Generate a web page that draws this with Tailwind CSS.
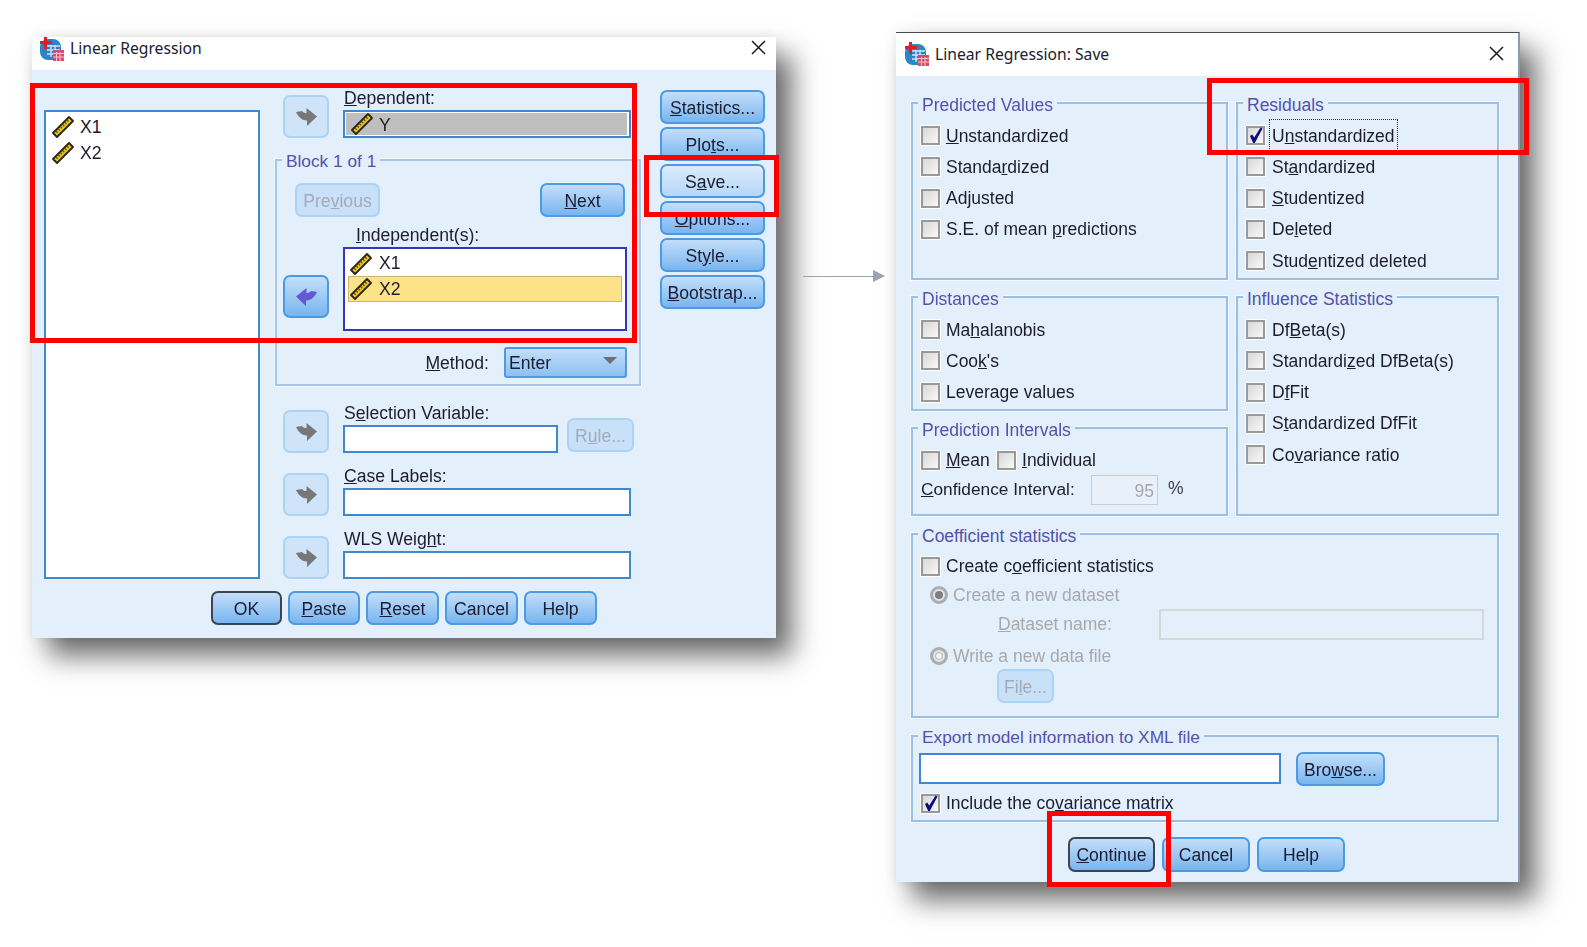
<!DOCTYPE html>
<html lang="en">
<head>
  <meta charset="UTF-8" />
  <meta name="viewport" content="width=device-width, initial-scale=1.0"/>
  <title>Linear Regression</title>
  <script src="https://cdn.jsdelivr.net/npm/@tailwindcss/browser@4"></script>
</head>
<body class="relative w-[1587px] h-[947px] overflow-hidden bg-white font-['Liberation_Sans',sans-serif] text-[#1c1c30]">

  <!-- Shared icons -->
  <svg class="hidden">
    <symbol id="ruler" viewBox="0 0 22 22">
      <polygon points="1,17 17,1 21,5 5,21" fill="#f0c61c" stroke="#26261a" stroke-width="1.8" stroke-linejoin="round"/>
      <path d="M4.5 16.5L16.5 4.5" stroke="#5f5210" stroke-width="2" stroke-dasharray="1.4 1.7" fill="none"/>
    </symbol>
    <symbol id="arrow" viewBox="0 0 21 18">
      <path d="M10.5 0L21 8.5L11 18V12.5C7 12.5 3 10.5 0 4L6 3C7 4.5 8.5 5 10.5 5Z"/>
    </symbol>
    <symbol id="tick" viewBox="0 0 19 19">
      <path d="M4 10L6.2 8.4L8.2 11.5L14.6 1.5L16.5 2.4L8.8 17H7.2Z" fill="#0b0b80"/>
    </symbol>
    <symbol id="spss" viewBox="0 0 24 24">
      <rect x="0" y="2" width="21" height="21" rx="8" fill="#2f83c4"/>
      <path d="M7 9H20M7 13H20M7 17H14M11 8V20M15 8V14" stroke="#cfe6f7" stroke-width="1.4" fill="none"/>
      <rect x="4" y="0" width="3" height="12" fill="#d4202c"/>
      <rect x="0" y="4" width="12" height="3" fill="#d4202c"/>
      <rect x="13" y="13" width="11" height="11" fill="#d2506b"/>
      <path d="M13 16.5H24M13 20H24M16.5 15V24M20 15V24" stroke="#f3c4cf" stroke-width="1" fill="none"/>
    </symbol>
    <symbol id="close" viewBox="0 0 15 15">
      <path d="M1 1L14 14M14 1L1 14" stroke="#1a1a1a" stroke-width="1.5" fill="none"/>
    </symbol>
  </svg>

  <!-- Linear Regression window -->
  <div class="absolute left-[32px] top-[37px] w-[744px] h-[601px] flex flex-col bg-[#e3effb] text-[17.6px] shadow-[16px_18px_26px_rgba(0,0,0,0.58),0_0_12px_rgba(0,0,0,0.08)]">
    <div class="h-[33px] shrink-0 bg-white flex items-start justify-between pl-[8px] pr-[10px]">
      <div class="flex items-center h-[24px] gap-[6px]">
        <svg class="w-[24px] h-[24px]"><use href="#spss"/></svg>
        <span class="font-['Noto_Sans',sans-serif] text-[15.7px] text-[#202030]">Linear Regression</span>
      </div>
      <svg class="w-[15px] h-[15px] mt-[3px]"><use href="#close"/></svg>
    </div>

    <div class="flex-1 flex flex-col pl-[12px] blur-[0.4px]">
      <div class="flex">
        <!-- Source list -->
        <div class="mt-[40px] w-[216px] h-[469px] border-2 border-[#3f88cf] bg-white pl-[6px] pt-[2px] flex flex-col">
          <div class="h-[26px] flex items-center gap-[6px]"><svg class="w-[22px] h-[22px]"><use href="#ruler"/></svg>X1</div>
          <div class="h-[26px] flex items-center gap-[6px]"><svg class="w-[22px] h-[22px]"><use href="#ruler"/></svg>X2</div>
        </div>

        <!-- Middle column -->
        <div class="ml-[15px] w-[366px] pt-[20px] flex flex-col">
          <div class="flex items-end pl-[8px]">
            <div class="w-[46px] h-[43px] rounded-[7px] border-2 border-[#abd3f6] bg-[#cfe4f9] flex items-center justify-center"><svg class="w-[21px] h-[18px] fill-[#777777]"><use href="#arrow"/></svg></div>
            <div class="ml-[14px] w-[288px] flex flex-col">
              <div class="h-[20px] leading-[16px] pl-[1px]"><u>D</u>ependent:</div>
              <div class="h-[28px] border-2 border-[#3f88cf] bg-white p-[1px] pr-[2px]">
                <div class="h-full bg-[#bfbfbf] flex items-center gap-[6px] pl-[5px] pt-[2px]"><svg class="w-[22px] h-[22px] -mt-[2px]"><use href="#ruler"/></svg>Y</div>
              </div>
            </div>
          </div>

          <!-- Block group -->
          <div class="relative mt-[21px] h-[227px] border-2 border-[#a6c7e6] shadow-[0_0_0_1px_#f3f8fd] pt-[22px] flex flex-col">
            <span class="absolute -top-[12px] left-[5px] px-[4px] bg-[#e3effb] text-[#5252ad] text-[17.3px]">Block 1 of 1</span>
            <div class="flex justify-between pl-[18px] pr-[14px]">
              <div class="w-[85px] h-[34px] pt-[2px] rounded-[7px] border-2 border-[#abd3f6] bg-[#c8e0f8] text-[#a3acb6] flex items-center justify-center"><span>Pre<u>v</u>ious</span></div>
              <div class="w-[85px] h-[34px] pt-[2px] rounded-[7px] border-2 border-[#4b9ae3] bg-linear-to-b from-[#c3defa] to-[#78b5ee] flex items-center justify-center"><span><u>N</u>ext</span></div>
            </div>
            <div class="mt-[10px] flex items-start pl-[6px]">
              <div class="mt-[48px] w-[46px] h-[43px] rounded-[7px] border-2 border-[#4b9ae3] bg-linear-to-b from-[#c3defa] to-[#78b5ee] flex items-center justify-center"><svg class="w-[21px] h-[18px] fill-[#6459d2] -scale-x-100"><use href="#arrow"/></svg></div>
              <div class="ml-[14px] w-[284px] flex flex-col">
                <div class="h-[20px] leading-[16px] pl-[13px]"><u>I</u>ndependent(s):</div>
                <div class="h-[84px] border-2 border-[#3535bd] bg-white pl-[3px] pr-[3px] pt-[2px] flex flex-col">
                  <div class="h-[25px] flex items-center gap-[7px] pl-[2px]"><svg class="w-[22px] h-[22px]"><use href="#ruler"/></svg>X1</div>
                  <div class="h-[26px] flex items-center gap-[7px] pl-[1px] bg-[#fde288] border border-[#c9b670]"><svg class="w-[22px] h-[22px]"><use href="#ruler"/></svg>X2</div>
                </div>
              </div>
            </div>
            <div class="mt-[16px] flex items-center justify-end pr-[12px]">
              <span class="pt-[2px]"><u>M</u>ethod:</span>
              <div class="ml-[15px] w-[123px] h-[31px] rounded-[3px] border-2 border-[#4b9ae3] bg-linear-to-b from-[#c3defa] to-[#8cc0f1] flex items-center justify-between pl-[3px] pr-[8px]">
                <span class="pt-[2px]">Enter</span>
                <span class="mb-[4px] w-0 h-0 border-x-[7px] border-x-transparent border-t-[7px] border-t-[#6f6f6f]"></span>
              </div>
            </div>
          </div>

          <!-- Selection variable -->
          <div class="mt-[19px] flex items-end pl-[8px]">
            <div class="w-[46px] h-[43px] rounded-[7px] border-2 border-[#abd3f6] bg-[#cfe4f9] flex items-center justify-center"><svg class="w-[21px] h-[18px] fill-[#777777]"><use href="#arrow"/></svg></div>
            <div class="ml-[14px] w-[215px] flex flex-col">
              <div class="h-[20px] leading-[16px] pl-[1px] whitespace-nowrap">S<u>e</u>lection Variable:</div>
              <div class="h-[28px] border-2 border-[#3f88cf] bg-white"></div>
            </div>
            <div class="ml-[9px] mb-[1px] w-[67px] h-[34px] pt-[2px] rounded-[7px] border-2 border-[#abd3f6] bg-[#c8e0f8] text-[#a3acb6] flex items-center justify-center"><span>R<u>u</u>le...</span></div>
          </div>

          <!-- Case labels -->
          <div class="mt-[15px] flex items-end pl-[8px]">
            <div class="w-[46px] h-[43px] rounded-[7px] border-2 border-[#abd3f6] bg-[#cfe4f9] flex items-center justify-center"><svg class="w-[21px] h-[18px] fill-[#777777]"><use href="#arrow"/></svg></div>
            <div class="ml-[14px] w-[288px] flex flex-col">
              <div class="h-[20px] leading-[16px] pl-[1px]"><u>C</u>ase Labels:</div>
              <div class="h-[28px] border-2 border-[#3f88cf] bg-white"></div>
            </div>
          </div>

          <!-- WLS weight -->
          <div class="mt-[15px] flex items-end pl-[8px]">
            <div class="w-[46px] h-[43px] rounded-[7px] border-2 border-[#abd3f6] bg-[#cfe4f9] flex items-center justify-center"><svg class="w-[21px] h-[18px] fill-[#777777]"><use href="#arrow"/></svg></div>
            <div class="ml-[14px] w-[288px] flex flex-col">
              <div class="h-[20px] leading-[16px] pl-[1px]">WLS Wei<u>gh</u>t:</div>
              <div class="h-[28px] border-2 border-[#3f88cf] bg-white"></div>
            </div>
          </div>
        </div>

        <!-- Right buttons -->
        <div class="ml-[19px] pt-[20px] w-[105px] flex flex-col gap-[3px]">
          <div class="h-[34px] pt-[2px] rounded-[7px] border-2 border-[#4b9ae3] bg-linear-to-b from-[#c3defa] to-[#78b5ee] flex items-center justify-center"><span><u>S</u>tatistics...</span></div>
          <div class="h-[34px] pt-[2px] rounded-[7px] border-2 border-[#4b9ae3] bg-linear-to-b from-[#c3defa] to-[#78b5ee] flex items-center justify-center"><span>Plo<u>t</u>s...</span></div>
          <div class="h-[34px] pt-[2px] rounded-[7px] border-2 border-[#4b9ae3] bg-linear-to-b from-[#dcecfd] to-[#b5d6f7] flex items-center justify-center"><span>S<u>a</u>ve...</span></div>
          <div class="h-[34px] pt-[2px] rounded-[7px] border-2 border-[#4b9ae3] bg-linear-to-b from-[#c3defa] to-[#78b5ee] flex items-center justify-center"><span><u>O</u>ptions...</span></div>
          <div class="h-[34px] pt-[2px] rounded-[7px] border-2 border-[#4b9ae3] bg-linear-to-b from-[#c3defa] to-[#78b5ee] flex items-center justify-center"><span>St<u>y</u>le...</span></div>
          <div class="h-[34px] pt-[2px] rounded-[7px] border-2 border-[#4b9ae3] bg-linear-to-b from-[#c3defa] to-[#78b5ee] flex items-center justify-center"><span><u>B</u>ootstrap...</span></div>
        </div>
      </div>

      <!-- Footer buttons -->
      <div class="mt-[12px] pl-[167px] flex gap-[6px]">
        <div class="w-[71px] h-[34px] pt-[2px] rounded-[7px] border-2 border-[#3d4650] bg-linear-to-b from-[#c3defa] to-[#78b5ee] flex items-center justify-center">OK</div>
        <div class="w-[72px] h-[34px] pt-[2px] rounded-[7px] border-2 border-[#4b9ae3] bg-linear-to-b from-[#c3defa] to-[#78b5ee] flex items-center justify-center"><span><u>P</u>aste</span></div>
        <div class="w-[73px] h-[34px] pt-[2px] rounded-[7px] border-2 border-[#4b9ae3] bg-linear-to-b from-[#c3defa] to-[#78b5ee] flex items-center justify-center"><span><u>R</u>eset</span></div>
        <div class="w-[73px] h-[34px] pt-[2px] rounded-[7px] border-2 border-[#4b9ae3] bg-linear-to-b from-[#c3defa] to-[#78b5ee] flex items-center justify-center">Cancel</div>
        <div class="w-[73px] h-[34px] pt-[2px] rounded-[7px] border-2 border-[#4b9ae3] bg-linear-to-b from-[#c3defa] to-[#78b5ee] flex items-center justify-center">Help</div>
      </div>
    </div>
  </div>

  <!-- Arrow between the windows -->
  <div class="absolute left-[803px] top-[270px] flex items-center">
    <div class="w-[70px] h-px bg-[#9aa5b1]"></div>
    <div class="w-0 h-0 border-y-[6px] border-y-transparent border-l-[12px] border-l-[#9aa5b1]"></div>
  </div>

  <!-- Save window -->
  <div class="absolute left-[896px] top-[32px] w-[624px] h-[850px] flex flex-col bg-[#e3effb] text-[17.5px] border-t border-t-[#4a4a4a] border-r-2 border-r-[#8b9cae] shadow-[16px_18px_26px_rgba(0,0,0,0.58),0_0_12px_rgba(0,0,0,0.08)]">
    <div class="h-[43px] shrink-0 bg-white flex items-start justify-between pl-[9px] pr-[14px] pt-[9px]">
      <div class="flex items-center h-[24px] gap-[6px]">
        <svg class="w-[24px] h-[24px]"><use href="#spss"/></svg>
        <span class="font-['Noto_Sans',sans-serif] text-[15.7px] text-[#202030] pt-[2px]">Linear Regression: Save</span>
      </div>
      <svg class="w-[15px] h-[15px] mt-[4px]"><use href="#close"/></svg>
    </div>

    <div class="flex-1 flex flex-col pl-[15px] pt-[26px] w-[603px] blur-[0.4px]">
      <div class="flex gap-[8px]">
        <!-- Left groups -->
        <div class="w-[317px] flex flex-col">
          <div class="relative h-[178px] border-2 border-[#9cc0e3] shadow-[0_0_0_1px_#f3f8fd] pl-[8px] pt-[16px] flex flex-col">
            <span class="absolute -top-[12px] left-[5px] px-[4px] bg-[#e3effb] text-[#5252ad]">Predicted Values</span>
            <div class="h-[31.3px] flex items-center"><span class="w-[19px] h-[19px] mr-[6px] border-2 border-[#999999] shadow-[0_0_0_1px_#ffffff] bg-linear-to-br from-[#d8d8d8] to-[#f8f8f8]"></span><span><u>U</u>nstandardized</span></div>
            <div class="h-[31.3px] flex items-center"><span class="w-[19px] h-[19px] mr-[6px] border-2 border-[#999999] shadow-[0_0_0_1px_#ffffff] bg-linear-to-br from-[#d8d8d8] to-[#f8f8f8]"></span><span>Standa<u>r</u>dized</span></div>
            <div class="h-[31.3px] flex items-center"><span class="w-[19px] h-[19px] mr-[6px] border-2 border-[#999999] shadow-[0_0_0_1px_#ffffff] bg-linear-to-br from-[#d8d8d8] to-[#f8f8f8]"></span><span>Ad<u>j</u>usted</span></div>
            <div class="h-[31.3px] flex items-center"><span class="w-[19px] h-[19px] mr-[6px] border-2 border-[#999999] shadow-[0_0_0_1px_#ffffff] bg-linear-to-br from-[#d8d8d8] to-[#f8f8f8]"></span><span>S.E. of mean <u>p</u>redictions</span></div>
          </div>
          <div class="relative mt-[16px] h-[115px] border-2 border-[#9cc0e3] shadow-[0_0_0_1px_#f3f8fd] pl-[8px] pt-[16px] flex flex-col">
            <span class="absolute -top-[12px] left-[5px] px-[4px] bg-[#e3effb] text-[#5252ad]">Distances</span>
            <div class="h-[31.3px] flex items-center"><span class="w-[19px] h-[19px] mr-[6px] border-2 border-[#999999] shadow-[0_0_0_1px_#ffffff] bg-linear-to-br from-[#d8d8d8] to-[#f8f8f8]"></span><span>Ma<u>h</u>alanobis</span></div>
            <div class="h-[31.3px] flex items-center"><span class="w-[19px] h-[19px] mr-[6px] border-2 border-[#999999] shadow-[0_0_0_1px_#ffffff] bg-linear-to-br from-[#d8d8d8] to-[#f8f8f8]"></span><span>Coo<u>k</u>'s</span></div>
            <div class="h-[31.3px] flex items-center"><span class="w-[19px] h-[19px] mr-[6px] border-2 border-[#999999] shadow-[0_0_0_1px_#ffffff] bg-linear-to-br from-[#d8d8d8] to-[#f8f8f8]"></span><span>Leverage values</span></div>
          </div>
          <div class="relative mt-[16px] h-[89px] border-2 border-[#9cc0e3] shadow-[0_0_0_1px_#f3f8fd] pl-[8px] pt-[16px] flex flex-col">
            <span class="absolute -top-[12px] left-[5px] px-[4px] bg-[#e3effb] text-[#5252ad]">Prediction Intervals</span>
            <div class="h-[30px] flex items-center">
              <span class="w-[19px] h-[19px] mr-[6px] border-2 border-[#999999] shadow-[0_0_0_1px_#ffffff] bg-linear-to-br from-[#d8d8d8] to-[#f8f8f8]"></span><span class="w-[51px]"><u>M</u>ean</span>
              <span class="w-[19px] h-[19px] mr-[6px] border-2 border-[#999999] shadow-[0_0_0_1px_#ffffff] bg-linear-to-br from-[#d8d8d8] to-[#f8f8f8]"></span><span><u>I</u>ndividual</span>
            </div>
            <div class="h-[30px] flex items-center">
              <span class="w-[170px] text-[17.3px]"><u>C</u>onfidence Interval:</span>
              <span class="w-[67px] h-[30px] pt-[2px] border border-[#c9ccd0] bg-[#e8f1fa] text-[#a3a8ae] flex items-center justify-end pr-[3px]">95</span>
              <span class="ml-[10px] mb-[3px] text-[#3c3c4c]">%</span>
            </div>
          </div>
        </div>

        <!-- Right groups -->
        <div class="w-[263px] flex flex-col">
          <div class="relative h-[178px] border-2 border-[#9cc0e3] shadow-[0_0_0_1px_#f3f8fd] pl-[8px] pt-[16px] flex flex-col">
            <span class="absolute -top-[12px] left-[5px] px-[4px] bg-[#e3effb] text-[#5252ad]">Residuals</span>
            <div class="h-[31.3px] flex items-center"><span class="w-[19px] h-[19px] mr-[4px] border-2 border-[#999999] shadow-[0_0_0_1px_#ffffff] bg-linear-to-br from-[#d8d8d8] to-[#f8f8f8]"><svg class="w-[19px] h-[19px] -m-[2px]"><use href="#tick"/></svg></span><span class="border border-dotted border-[#303030] px-[2px] py-[3px]">U<u>n</u>standardized</span></div>
            <div class="h-[31.3px] flex items-center"><span class="w-[19px] h-[19px] mr-[7px] border-2 border-[#999999] shadow-[0_0_0_1px_#ffffff] bg-linear-to-br from-[#d8d8d8] to-[#f8f8f8]"></span><span>St<u>a</u>ndardized</span></div>
            <div class="h-[31.3px] flex items-center"><span class="w-[19px] h-[19px] mr-[7px] border-2 border-[#999999] shadow-[0_0_0_1px_#ffffff] bg-linear-to-br from-[#d8d8d8] to-[#f8f8f8]"></span><span><u>S</u>tudentized</span></div>
            <div class="h-[31.3px] flex items-center"><span class="w-[19px] h-[19px] mr-[7px] border-2 border-[#999999] shadow-[0_0_0_1px_#ffffff] bg-linear-to-br from-[#d8d8d8] to-[#f8f8f8]"></span><span>De<u>l</u>eted</span></div>
            <div class="h-[31.3px] flex items-center"><span class="w-[19px] h-[19px] mr-[7px] border-2 border-[#999999] shadow-[0_0_0_1px_#ffffff] bg-linear-to-br from-[#d8d8d8] to-[#f8f8f8]"></span><span>Stud<u>e</u>ntized deleted</span></div>
          </div>
          <div class="relative mt-[16px] h-[220px] border-2 border-[#9cc0e3] shadow-[0_0_0_1px_#f3f8fd] pl-[8px] pt-[16px] flex flex-col">
            <span class="absolute -top-[12px] left-[5px] px-[4px] bg-[#e3effb] text-[#5252ad]">Influence Statistics</span>
            <div class="h-[31.3px] flex items-center"><span class="w-[19px] h-[19px] mr-[7px] border-2 border-[#999999] shadow-[0_0_0_1px_#ffffff] bg-linear-to-br from-[#d8d8d8] to-[#f8f8f8]"></span><span>Df<u>B</u>eta(s)</span></div>
            <div class="h-[31.3px] flex items-center"><span class="w-[19px] h-[19px] mr-[7px] border-2 border-[#999999] shadow-[0_0_0_1px_#ffffff] bg-linear-to-br from-[#d8d8d8] to-[#f8f8f8]"></span><span>Standardi<u>z</u>ed DfBeta(s)</span></div>
            <div class="h-[31.3px] flex items-center"><span class="w-[19px] h-[19px] mr-[7px] border-2 border-[#999999] shadow-[0_0_0_1px_#ffffff] bg-linear-to-br from-[#d8d8d8] to-[#f8f8f8]"></span><span>D<u>f</u>Fit</span></div>
            <div class="h-[31.3px] flex items-center"><span class="w-[19px] h-[19px] mr-[7px] border-2 border-[#999999] shadow-[0_0_0_1px_#ffffff] bg-linear-to-br from-[#d8d8d8] to-[#f8f8f8]"></span><span>S<u>t</u>andardized DfFit</span></div>
            <div class="h-[31.3px] flex items-center"><span class="w-[19px] h-[19px] mr-[7px] border-2 border-[#999999] shadow-[0_0_0_1px_#ffffff] bg-linear-to-br from-[#d8d8d8] to-[#f8f8f8]"></span><span>Co<u>v</u>ariance ratio</span></div>
          </div>
        </div>
      </div>

      <!-- Coefficient statistics -->
      <div class="relative mt-[17px] h-[185px] border-2 border-[#9cc0e3] shadow-[0_0_0_1px_#f3f8fd] pl-[8px] pt-[16px] flex flex-col">
        <span class="absolute -top-[12px] left-[5px] px-[4px] bg-[#e3effb] text-[#5252ad]">Coefficient statistics</span>
        <div class="h-[30px] flex items-center"><span class="w-[19px] h-[19px] mr-[6px] border-2 border-[#999999] shadow-[0_0_0_1px_#ffffff] bg-linear-to-br from-[#d8d8d8] to-[#f8f8f8]"></span><span>Create c<u>o</u>efficient statistics</span></div>
        <div class="h-[28px] pl-[9px] flex items-center text-[#a6a9ad]">
          <span class="w-[18px] h-[18px] mr-[5px] rounded-full border-[3px] border-[#a9acb0] bg-[#e4e4e4] flex items-center justify-center"><span class="w-[8px] h-[8px] rounded-full bg-[#7c7e82]"></span></span>
          <span>Create a new dataset</span>
        </div>
        <div class="h-[31px] pl-[77px] flex items-center text-[#a6a9ad]">
          <span class="w-[161px]"><u>D</u>ataset name:</span>
          <span class="w-[325px] h-[31px] border-2 border-[#d5d8db]"></span>
        </div>
        <div class="mt-[3px] h-[26px] pl-[9px] flex items-center text-[#a6a9ad]">
          <span class="w-[18px] h-[18px] mr-[5px] rounded-full border-[3px] border-[#a9acb0] bg-[#e4e4e4] flex items-center justify-center"><span class="w-[8px] h-[8px] rounded-full bg-[#f4f4f4] border border-[#b5b5b5]"></span></span>
          <span>Write a new data file</span>
        </div>
        <div class="ml-[76px] w-[57px] h-[34px] pt-[2px] rounded-[7px] border-2 border-[#abd3f6] bg-[#c8e0f8] text-[#a3acb6] flex items-center justify-center"><span>Fi<u>l</u>e...</span></div>
      </div>

      <!-- Export -->
      <div class="relative mt-[17px] h-[87px] border-2 border-[#9cc0e3] shadow-[0_0_0_1px_#f3f8fd] pl-[6px] pt-[15px] flex flex-col">
        <span class="absolute -top-[12px] left-[5px] px-[4px] bg-[#e3effb] text-[#5252ad] text-[17.3px]">Export model information to XML file</span>
        <div class="flex items-start">
          <div class="mt-[1px] w-[362px] h-[31px] border-2 border-[#3f88cf] bg-white"></div>
          <div class="ml-[15px] w-[89px] h-[34px] pt-[2px] rounded-[7px] border-2 border-[#4b9ae3] bg-linear-to-b from-[#c3defa] to-[#78b5ee] flex items-center justify-center"><span>Bro<u>w</u>se...</span></div>
        </div>
        <div class="mt-[1px] h-[32px] pl-[2px] flex items-center"><span class="w-[19px] h-[19px] mr-[6px] border-2 border-[#999999] shadow-[0_0_0_1px_#ffffff] bg-linear-to-br from-[#d8d8d8] to-[#f8f8f8]"><svg class="w-[19px] h-[19px] -m-[2px]"><use href="#tick"/></svg></span><span>Include the co<u>v</u>ariance matrix</span></div>
      </div>

      <!-- Footer buttons -->
      <div class="mt-[15px] pl-[157px] flex gap-[7px]">
        <div class="w-[87px] h-[35px] pt-[2px] rounded-[7px] border-2 border-[#3d4650] bg-linear-to-b from-[#c3defa] to-[#78b5ee] flex items-center justify-center"><span><u>C</u>ontinue</span></div>
        <div class="w-[88px] h-[35px] pt-[2px] rounded-[7px] border-2 border-[#4b9ae3] bg-linear-to-b from-[#c3defa] to-[#78b5ee] flex items-center justify-center">Cancel</div>
        <div class="w-[88px] h-[35px] pt-[2px] rounded-[7px] border-2 border-[#4b9ae3] bg-linear-to-b from-[#c3defa] to-[#78b5ee] flex items-center justify-center">Help</div>
      </div>
    </div>
  </div>

  <!-- Red highlights -->
  <div class="absolute left-[30px] top-[83px] w-[607px] h-[260px] border-[5px] border-[#ff0000]"></div>
  <div class="absolute left-[644px] top-[155px] w-[135px] h-[62px] border-[5px] border-[#ff0000]"></div>
  <div class="absolute left-[1207px] top-[78px] w-[322px] h-[77px] border-[5px] border-[#ff0000]"></div>
  <div class="absolute left-[1047px] top-[811px] w-[124px] h-[76px] border-[5px] border-[#ff0000]"></div>
</body>
</html>
